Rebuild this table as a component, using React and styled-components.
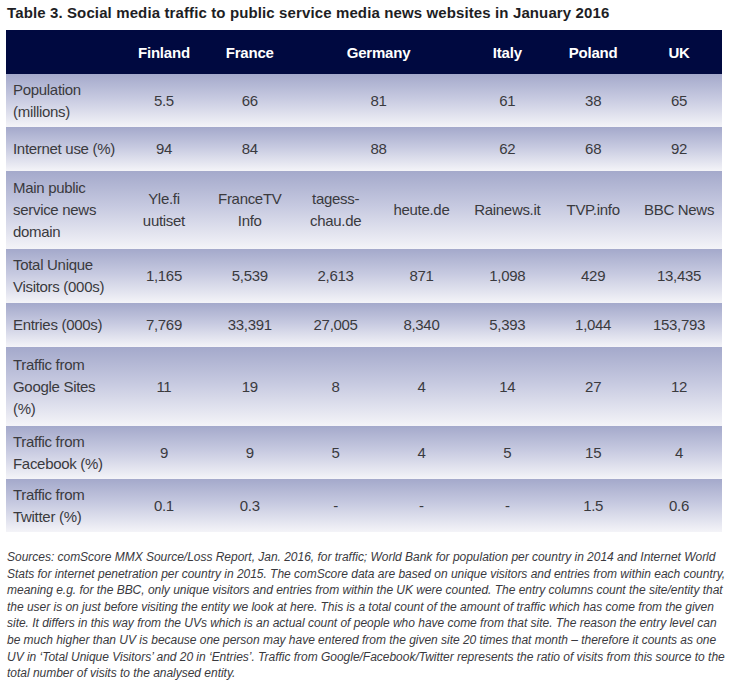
import React from "react";
import styled, { createGlobalStyle } from "styled-components";

const GlobalStyle = createGlobalStyle`
  body {
    margin: 0;
    background: #ffffff;
    font-family: "Liberation Sans", Arial, sans-serif;
  }
`;

const countries = [
  { name: "Finland", span: 1 },
  { name: "France", span: 1 },
  { name: "Germany", span: 2 },
  { name: "Italy", span: 1 },
  { name: "Poland", span: 1 },
  { name: "UK", span: 1 },
];

// each row: label lines, cells (with optional span), row height
const rows = [
  { label: ["Population", "(millions)"], h: 53, cells: [["5.5"], ["66"], ["81", 2], ["61"], ["38"], ["65"]] },
  { label: ["Internet use (%)"], h: 44, cells: [["94"], ["84"], ["88", 2], ["62"], ["68"], ["92"]] },
  {
    label: ["Main public", "service news", "domain"],
    h: 78,
    cells: [["Yle.fi\nuutiset"], ["FranceTV\nInfo"], ["tagess-\nchau.de"], ["heute.de"], ["Rainews.it"], ["TVP.info"], ["BBC News"]],
  },
  {
    label: ["Total Unique", "Visitors (000s)"],
    h: 54,
    cells: [["1,165"], ["5,539"], ["2,613"], ["871"], ["1,098"], ["429"], ["13,435"]],
  },
  {
    label: ["Entries (000s)"],
    h: 44,
    cells: [["7,769"], ["33,391"], ["27,005"], ["8,340"], ["5,393"], ["1,044"], ["153,793"]],
  },
  {
    label: ["Traffic from", "Google Sites", "(%)"],
    h: 79,
    cells: [["11"], ["19"], ["8"], ["4"], ["14"], ["27"], ["12"]],
  },
  {
    label: ["Traffic from", "Facebook (%)"],
    h: 53,
    cells: [["9"], ["9"], ["5"], ["4"], ["5"], ["15"], ["4"]],
  },
  {
    label: ["Traffic from", "Twitter (%)"],
    h: 53,
    cells: [["0.1"], ["0.3"], ["-"], ["-"], ["-"], ["1.5"], ["0.6"]],
  },
];

const notes = [
  "Sources: comScore MMX Source/Loss Report, Jan. 2016, for traffic; World Bank for population per country in 2014 and Internet World",
  "Stats for internet penetration per country in 2015. The comScore data are based on unique visitors and entries from within each country,",
  "meaning e.g. for the BBC, only unique visitors and entries from within the UK were counted. The entry columns count the site/entity that",
  "the user is on just before visiting the entity we look at here. This is a total count of the amount of traffic which has come from the given",
  "site. It differs in this way from the UVs which is an actual count of people who have come from that site. The reason the entry level can",
  "be much higher than UV is because one person may have entered from the given site 20 times that month \u2013 therefore it counts as one",
  "UV in \u2018Total Unique Visitors\u2019 and 20 in \u2018Entries\u2019. Traffic from Google/Facebook/Twitter represents the ratio of visits from this source to the",
  "total number of visits to the analysed entity.",
];

const App = () => {
  return (
    <>
      <GlobalStyle />
      <Page>
        <Title>Table 3. Social media traffic to public service media news websites in January 2016</Title>
        <Table>
          <colgroup>
            <col style={{ width: 115 }} />
            {Array.from({ length: 7 }).map((_, i) => (
              <col key={i} />
            ))}
          </colgroup>
          <thead>
            <tr>
              <HeadCell />
              {countries.map((c) => (
                <HeadCell key={c.name} colSpan={c.span}>
                  {c.name}
                </HeadCell>
              ))}
            </tr>
          </thead>
          <tbody>
            {rows.map((r, i) => (
              <Row key={i} $h={r.h}>
                <LabelCell>
                  {r.label.map((l) => (
                    <Line key={l}>{l}</Line>
                  ))}
                </LabelCell>
                {r.cells.map(([v, span], j) => (
                  <ValueCell key={j} colSpan={span || 1}>
                    {v.split("\n").map((l) => (
                      <Line key={l}>{l}</Line>
                    ))}
                  </ValueCell>
                ))}
              </Row>
            ))}
          </tbody>
        </Table>
        <Notes>
          {notes.map((n) => (
            <NoteLine key={n}>{n}</NoteLine>
          ))}
        </Notes>
      </Page>
    </>
  );
};

const Page = styled.div`
  width: 729px;
  padding: 4px 7px 0 6px;
  box-sizing: border-box;
`;

const Title = styled.h1`
  margin: 0 0 8px 1px;
  font-size: 15px;
  line-height: 18px;
  font-weight: bold;
  letter-spacing: 0.12px;
  color: #1e1e24;
  white-space: nowrap;
`;

const Table = styled.table`
  width: 716px;
  border-collapse: collapse;
  table-layout: fixed;
  font-size: 15px;
  color: #3a3a3e;
`;

const HeadCell = styled.th`
  height: 44px;
  padding: 0;
  background: #000940;
  color: #ffffff;
  font-weight: bold;
  font-size: 15px;
  letter-spacing: -0.2px;
  text-align: center;
  vertical-align: middle;
`;

const Row = styled.tr`
  height: ${({ $h }) => $h}px;

  td {
    padding: 0;
    background: linear-gradient(to bottom, #a4a9cb 0%, #c6c9e0 45%, #f4f4f8 100%);
    vertical-align: middle;
  }
`;

const LabelCell = styled.td`
  text-align: left;
  padding-left: 7px !important;
`;

const ValueCell = styled.td`
  text-align: center;
`;

const Line = styled.span`
  display: block;
  line-height: 22px;
  letter-spacing: -0.3px;
  white-space: nowrap;
`;

const Notes = styled.div`
  margin-top: 17px;
  padding-left: 1px;
  font-style: italic;
  font-size: 12px;
  line-height: 16.6px;
  letter-spacing: -0.02px;
  color: #3a3a3e;
`;

const NoteLine = styled.span`
  display: block;
  white-space: nowrap;
`;

export default App;
